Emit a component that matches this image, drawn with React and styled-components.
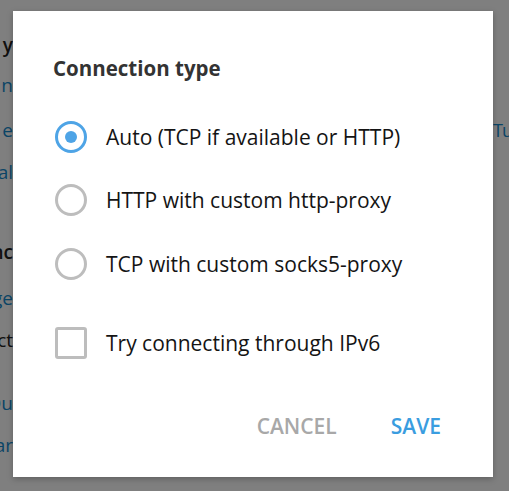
import React from "react";
import styled, { createGlobalStyle } from "styled-components";

const Global = createGlobalStyle`
  html, body { margin: 0; padding: 0; background: #ffffff; }
  body { font-family: "Open Sans", "Noto Sans", sans-serif; overflow: hidden; }
`;

const Page = styled.div`
  width: 509px;
  height: 491px;
  display: flex;
  position: relative;
  background: #ffffff;
`;

const SideColumn = styled.div`
  width: 13px;
  display: flex;
  flex-direction: column;
  padding-top: 31px;
`;

const BgLine = styled.div`
  display: flex;
  justify-content: flex-end;
  white-space: nowrap;
  height: 28px;
  line-height: 28px;
  margin-top: ${(p) => p.$gap || 0}px;
  font-size: 19px;
  font-weight: ${(p) => (p.$bold ? 600 : 400)};
  color: ${(p) => (p.$link ? "#168acd" : "#222222")};
`;

const RightColumn = styled.div`
  margin-left: auto;
  width: 16px;
  padding-top: 116px;
  display: flex;
  flex-direction: column;
`;

const RightLine = styled.div`
  white-space: nowrap;
  font-size: 18px;
  letter-spacing: -1px;
  line-height: 28px;
  color: #168acd;
`;

const Overlay = styled.div`
  position: absolute;
  inset: 0;
  background: rgba(0, 0, 0, 0.5);
  display: flex;
  align-items: flex-start;
  padding: 11px 0 0 13px;
`;

const Dialog = styled.div`
  width: 480px;
  height: 466px;
  background: #ffffff;
  box-shadow: 0 2px 6px rgba(0, 0, 0, 0.25);
  display: flex;
  flex-direction: column;
  padding: 44px 0 0 40px;
  box-sizing: border-box;
`;

const Title = styled.div`
  font-size: 20.5px;
  font-weight: 700;
  color: #333333;
  line-height: 26px;
  height: 26px;
`;

const Options = styled.div`
  display: flex;
  flex-direction: column;
  margin-top: 39px;
`;

const Row = styled.label`
  display: flex;
  align-items: center;
  height: 34px;
  margin-top: ${(p) => p.$gap || 0}px;
  gap: 19px;
  font-size: 21px;
  color: #141414;
  cursor: pointer;
`;

const RadioRing = styled.span`
  box-sizing: border-box;
  width: 32px;
  height: 32px;
  margin-left: 2px;
  border-radius: 50%;
  border: 3px solid ${(p) => (p.$on ? "#4ea4e6" : "#bdbdbd")};
  display: flex;
  align-items: center;
  justify-content: center;
  flex-shrink: 0;
`;

const RadioDot = styled.span`
  width: 12px;
  height: 12px;
  border-radius: 50%;
  background: #4ea4e6;
`;

const CheckBox = styled.span`
  box-sizing: border-box;
  width: 32px;
  height: 32px;
  margin-left: 2px;
  border-radius: 3px;
  border: 3px solid #bdbdbd;
  flex-shrink: 0;
`;

const Footer = styled.div`
  margin-top: auto;
  margin-bottom: 37px;
  margin-right: 52px;
  display: flex;
  justify-content: flex-end;
  gap: 54px;
`;

const Button = styled.button`
  background: none;
  border: none;
  padding: 0;
  font-family: inherit;
  font-size: 21px;
  font-weight: 600;
  line-height: 28px;
  color: ${(p) => (p.$primary ? "#3a9de0" : "#a8a8a8")};
  cursor: pointer;
`;

const bgLines = [
  { t: "y", bold: true, gap: 0 },
  { t: "n", link: true, gap: 12 },
  { t: "e", link: true, gap: 17 },
  { t: "al", link: true, gap: 14 },
  { t: "nc", bold: true, gap: 52 },
  { t: "ge", link: true, gap: 18 },
  { t: "ct", gap: 14 },
  { t: "Qu", link: true, gap: 35 },
  { t: "ar", link: true, gap: 14 },
];

export default function App() {
  return (
    <>
      <Global />
      <Page>
        <SideColumn>
          {bgLines.map((l) => (
            <BgLine key={l.t} $bold={l.bold} $link={l.link} $gap={l.gap}>
              {l.t}
            </BgLine>
          ))}
        </SideColumn>
        <RightColumn>
          <RightLine>Tu</RightLine>
        </RightColumn>
        <Overlay>
          <Dialog>
            <Title>Connection type</Title>
            <Options>
              <Row>
                <RadioRing $on>
                  <RadioDot />
                </RadioRing>
                Auto (TCP if available or HTTP)
              </Row>
              <Row $gap={29}>
                <RadioRing />
                HTTP with custom http-proxy
              </Row>
              <Row $gap={30}>
                <RadioRing />
                TCP with custom socks5-proxy
              </Row>
              <Row $gap={45}>
                <CheckBox />
                Try connecting through IPv6
              </Row>
            </Options>
            <Footer>
              <Button>CANCEL</Button>
              <Button $primary>SAVE</Button>
            </Footer>
          </Dialog>
        </Overlay>
      </Page>
    </>
  );
}
